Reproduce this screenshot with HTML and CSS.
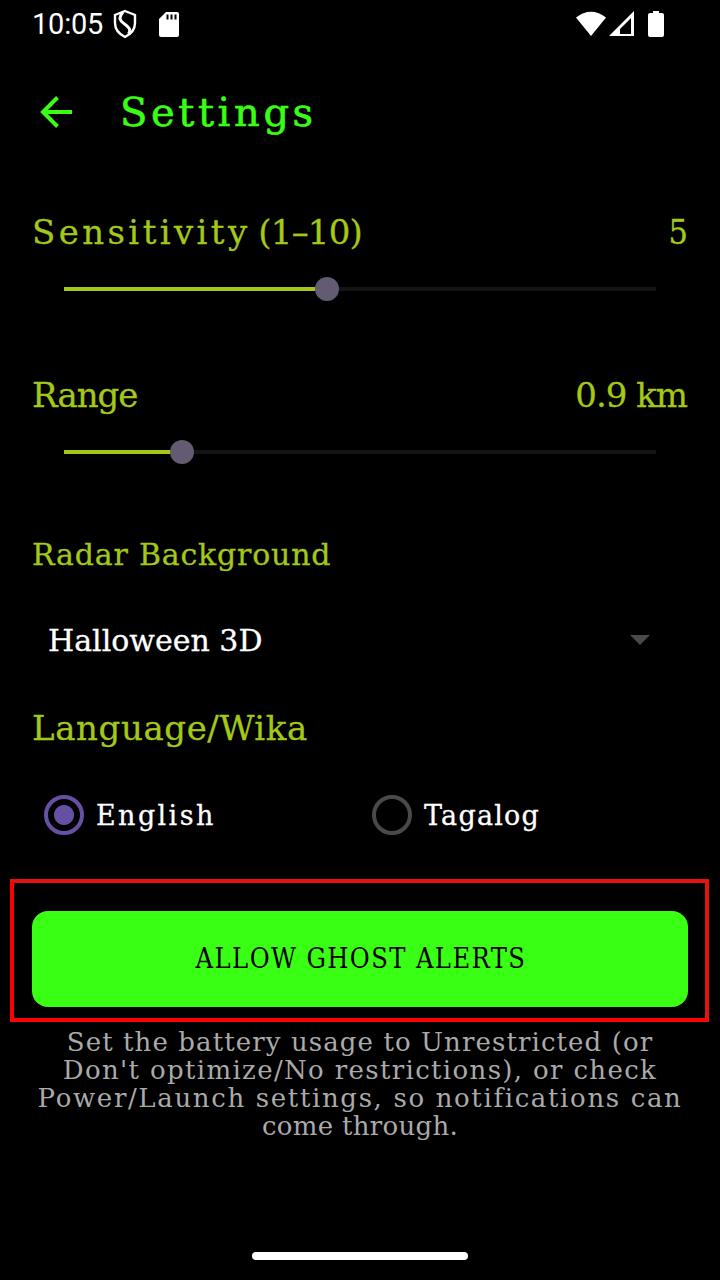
FILE: index.html
```html
<!DOCTYPE html>
<html lang="en">
<head>
<meta charset="utf-8">
<title>Settings</title>
<link rel="stylesheet" href="styles.css">
</head>
<body>
<div class="screen">
  <header class="status">
    <span class="clock">10:05</span>
    <svg class="shield" width="24" height="30" viewBox="0 0 24 30" fill="none" stroke="#fff" stroke-width="2.4"><path d="M12 2 22 6v8c0 6-4 11-10 14C6 25 2 20 2 14V6z"/><path d="M10 3C5 9 7 12 11.500 15s7 6 4 10" stroke-width="3"/></svg>
    <svg class="card" width="20" height="25" viewBox="0 0 20 25"><path fill="#fff" d="M7 0h11q2 0 2 2v21q0 2-2 2H2q-2 0-2-2V7z"/><path stroke="#000" stroke-width="2" d="M8.500 2.500v5M12.500 2.500v5M16.500 2.500v5"/></svg>
    <svg class="signals" width="90" height="26" viewBox="0 0 90 26"><path fill="#fff" d="M0 6.500Q15-5 30 6.500L15 25z"/><path fill="#fff" fill-rule="evenodd" d="M33 25 58 0v25zM44 23h11V7L44 18z"/><path fill="#fff" d="M77 0h6v2h3q2 0 2 2v20q0 2-2 2H74q-2 0-2-2V4q0-2 2-2h3z"/></svg>
  </header>
  <div class="appbar">
    <svg width="32" height="32" viewBox="0 0 32 32" fill="none" stroke="#39ff14" stroke-width="4"><path d="M32 16H4M17.500 1.500 3 16l14.500 14.500"/></svg>
    <h1 class="title">Settings</h1>
  </div>
  <main class="content">
    <section class="setting">
      <div class="row"><span class="label"><span class="sensitivity">Sensitivity</span> <span class="limits">(1–10)</span></span><span class="label five">5</span></div>
      <div class="slider"><div class="fill" style="width:263px"></div><div class="thumb"></div></div>
    </section>
    <section class="setting">
      <div class="row"><span class="label range">Range</span><span class="label distance">0.9 km</span></div>
      <div class="slider"><div class="fill" style="width:118px"></div><div class="thumb"></div></div>
    </section>
    <h2 class="radar">Radar Background</h2>
    <div class="select"><span>Halloween 3D</span><svg width="20" height="10" viewBox="0 0 20 10"><path fill="#494949" d="M0 0h20L10 10z"/></svg></div>
    <h2 class="language">Language/Wika</h2>
    <div class="options">
      <label class="option"><span class="radio on"></span><span class="english">English</span></label>
      <label class="option"><span class="radio"></span><span class="tagalog">Tagalog</span></label>
    </div>
    <div class="highlight"><button class="allow">ALLOW GHOST ALERTS</button></div>
    <p class="note">
      <span class="l1">Set the battery usage to Unrestricted (or</span>
      <span class="l2">Don't optimize/No restrictions), or check</span>
      <span class="l3">Power/Launch settings, so notifications can</span>
      <span class="l4">come through.</span>
    </p>
  </main>
  <div class="homebar"></div>
</div>
</body>
</html>
```
FILE: styles.css
```css
* { box-sizing: border-box; }
body { margin: 0; background: #000; }
h1, h2, p { margin: 0; font-weight: 400; }
svg { display: block; flex: none; }
.screen { width: 720px; height: 1280px; display: flex; flex-direction: column; background: #000; color: #fff; font-family: "DejaVu Serif", serif; white-space: nowrap; overflow: hidden; }
.status { height: 48px; display: flex; align-items: center; padding: 0 54px 0 32px; font: 29px/48px Roboto, sans-serif; }
.clock { width: 81px; letter-spacing: -.2px; }
.card { margin-left: 22px; }
.signals { margin-left: auto; }
.appbar { height: 128px; display: flex; align-items: center; gap: 48px; padding-left: 40px; color: #39ff14; }
.title { font-size: 40px; line-height: 48px; letter-spacing: 3.6px; -webkit-text-stroke: .6px; }
.content { padding: 0 32px; color: #a4c817; -webkit-text-stroke: .3px; }
.setting { height: 163px; padding-top: 32px; }
.row { height: 48px; display: flex; justify-content: space-between; align-items: center; }
.label { font-size: 34px; line-height: 48px; }
.sensitivity { letter-spacing: 3.4px; }
.limits { letter-spacing: -.8px; margin-left: -3px; }
.five { font-family: "DejaVu Serif Condensed", "DejaVu Serif", serif; }
.range { letter-spacing: -1px; }
.distance { letter-spacing: -1px; margin-right: 1px; }
.slider { height: 24px; margin: 21px 32px 0; display: flex; align-items: center; background: linear-gradient(#141414, #141414) center / 100% 4px no-repeat; }
.fill { height: 4px; background: #a4c817; }
.thumb { width: 24px; height: 24px; border-radius: 50%; background: #625b71; margin-left: -12px; }
.radar { height: 106px; padding-top: 32px; font-size: 30px; line-height: 42px; letter-spacing: .8px; }
.select { height: 64px; display: flex; align-items: center; justify-content: space-between; padding: 0 38px 0 16px; color: #fff; font-size: 30px; }
.language { height: 123px; padding-top: 32px; font-size: 34px; line-height: 48px; letter-spacing: .6px; }
.options { height: 44px; display: grid; grid-template-columns: 1fr 1fr; color: #fff; font-size: 27px; }
.option { display: flex; align-items: center; gap: 12px; padding-left: 12px; height: 40px; }
.radio { width: 40px; height: 40px; border: 4px solid #494949; border-radius: 50%; }
.radio.on { border-color: #6750a4; background: radial-gradient(circle, #6750a4 9.5px, transparent 10.500px); }
.english { letter-spacing: 2.4px; }
.tagalog { letter-spacing: 1.2px; }
.highlight { height: 143px; margin: 40px -21px 0 -22px; padding: 28px 17px 0 18px; border: 4px solid #f00; border-top-color: #e51213; border-right-color: #e51213; }
.allow { display: block; width: 656px; height: 96px; padding: 0 0 2px 2px; border: 0; border-radius: 16px; background: #39ff14; color: #000; font: 27px "DejaVu Serif Condensed", "DejaVu Serif", serif; letter-spacing: 1.4px; -webkit-text-stroke: 0; }
.note { padding-top: 6px; display: flex; flex-direction: column; align-items: center; color: #aaa; font-size: 26px; line-height: 28px; -webkit-text-stroke: 0; }
.l1 { letter-spacing: 1.1px; }
.l2 { letter-spacing: 1.35px; }
.l3 { letter-spacing: 1.65px; }
.l4 { letter-spacing: .3px; }
.homebar { width: 216px; height: 8px; margin: auto auto 20px; border-radius: 4px; background: #fff; }
```
